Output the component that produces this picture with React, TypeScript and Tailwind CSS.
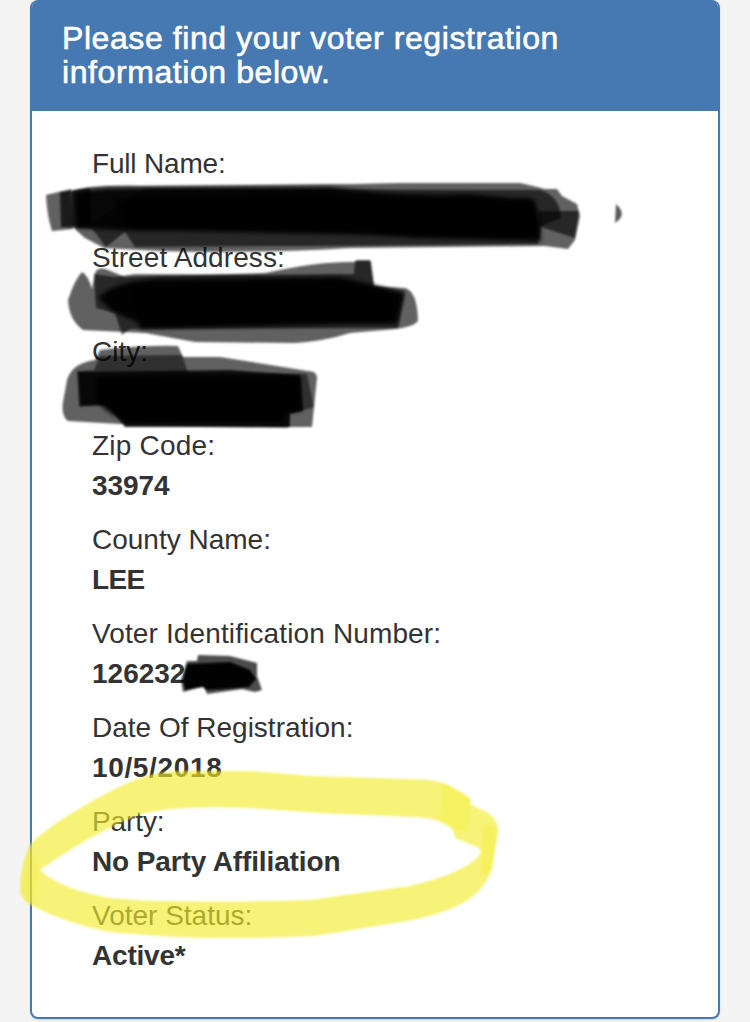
type Field = { label: string; value: string; labelClass?: string; valueClass?: string };

const fields: Field[] = [
  { label: 'Full Name:', value: '', labelClass: 'tracking-[-0.18px]' },
  { label: 'Street Address:', value: '', labelClass: 'tracking-[0.1px]' },
  { label: 'City:', value: '' },
  { label: 'Zip Code:', value: '33974', labelClass: 'tracking-[0.2px]', valueClass: 'tracking-[-0.1px]' },
  { label: 'County Name:', value: 'LEE', valueClass: 'tracking-[-0.7px]' },
  { label: 'Voter Identification Number:', value: '126232', labelClass: 'tracking-[0.13px]' },
  { label: 'Date Of Registration:', value: '10/5/2018', valueClass: 'tracking-[0.65px]' },
  { label: 'Party:', value: 'No Party Affiliation', labelClass: 'tracking-[-0.1px]', valueClass: 'tracking-[-0.13px]' },
  { label: 'Voter Status:', value: 'Active*', valueClass: 'tracking-[-0.2px]' },
];

function FieldRow({ label, value, labelClass = '', valueClass = '' }: Field) {
  return (
    <div className="mb-[14px] h-20 whitespace-nowrap text-[28px] leading-10 text-[#333]">
      <dt className={labelClass}>{label}</dt>
      <dd className={`h-10 font-bold ${valueClass}`}>{value}</dd>
    </div>
  );
}

/* Marker strokes drawn over the card: black redactions and a yellow highlight. */
function Markup() {
  return (
    <svg className="pointer-events-none absolute left-0 top-0" width="750" height="1022" viewBox="0 0 750 1022" aria-hidden="true">
      <defs>
        <filter id="soft" x="-5%" y="-20%" width="110%" height="140%">
          <feGaussianBlur stdDeviation="1.3" />
        </filter>
        <filter id="softer" x="-5%" y="-20%" width="110%" height="140%">
          <feGaussianBlur stdDeviation="2.2" />
        </filter>
      </defs>

      <g filter="url(#soft)" fill="#000">
        <path fillOpacity=".62" d="M46 195L71 189L73 229L52 231Q47 216 46 195Z" />
        <path fillOpacity=".72" d="M60 192L90 188L92 228L61 227Z" />
        <path fillOpacity=".62" d="M72 191Q90 185 140 186L355 184L400 183H520Q534 186 545 189H557L562 196L577 204L580 216L575 240L568 249L545 246L350 248Q250 254 160 251L104 248L85 238Q74 229 72 224Z" />
        <path fillOpacity=".6" d="M90 226L130 196L145 189L540 190Q560 196 561 218L541 226L538 244L310 246L135 247L125 232L106 247Z" />
        <path fillOpacity=".6" d="M538 211H579L575 238L538 226Z" />
        <path fillOpacity=".65" d="M616 204Q628 215 615 223Z" />
      </g>
      <g filter="url(#softer)" fill="#000">
        <path fillOpacity=".93" d="M74 193Q90 188 120 188L330 187Q400 197 470 194L534 200Q541 216 541 241L420 238Q300 229 140 231L76 228Z" />
        <path fillOpacity=".88" d="M115 200L530 198Q538 200 538 232L520 238L130 230Z" />
      </g>

      <g filter="url(#soft)" fill="#000">
        <path fillOpacity=".62" d="M82 272Q88 275 92 289L95 273Q98 266 108 270L125 277L265 273Q320 261 354 262L357 260H370L374 286L405 288Q417 291 418 320Q417 326 396 329L350 333Q325 341 295 343L195 342L145 333L83 330Q69 320 68 300Q75 279 82 272Z" />
        <path fillOpacity=".6" d="M94 274L115 277L135 274L270 275L354 274L355 261H371L374 286L405 291L398 328L130 329L122 335L115 313L96 308Z" />
      </g>
      <g filter="url(#softer)" fill="#000">
        <path fillOpacity=".94" d="M98 298Q112 282 155 279L340 277L370 284L404 294L397 324L330 323L150 328L112 311Z" />
        <path fillOpacity=".9" d="M130 286L355 282L395 294L390 323L140 329Z" />
      </g>

      <g filter="url(#soft)" fill="#000">
        <path fillOpacity=".62" d="M67 380Q72 363 95 360L100 350Q145 345 178 346L183 357H220L308 371Q317 371 317 378L312 427L290 427L120 424L68 421Q61 416 63 402Z" />
        <path fillOpacity=".5" d="M94 370L100 356L182 355L188 373L307 374L314 407L290 414L288 428L125 426L112 404L79 407L77 371Z" />
        <path fillOpacity=".82" d="M78 372L230 370L300 375L303 411L290 413V427L125 427L113 412L109 405L80 406Z" />
      </g>
      <path filter="url(#softer)" fillOpacity=".94" d="M96 377L300 376L301 411L285 413L284 422H130Q113 418 96 401Z" />

      <g fill="#000" filter="url(#soft)">
        <path fillOpacity=".7" d="M187 661L197 661L198 655L230 656L257 663L257 676L262 690L255 692L242 689L207 694L204 686L183 692L181 680Z" />
        <path fillOpacity=".97" d="M187 664L230 662L250 670L256 679L249 687L225 689L206 690L203 687L185 690L183 679Z" />
      </g>

      <g filter="url(#soft)" fill="#f3ec29">
        <path fillOpacity=".64" d="M30 845C42 830 94 797 135 780Q155 771 185 771L250 771Q280 773 310 776L407 779Q441 779 454 788L471 799L470 804L484 811Q498 817 498 832L492 869Q486 889 463 903Q440 915 407 921L315 936Q190 942 104 931Q58 920 33 906Q20 900 20 888Q20 864 30 845ZM40 870Q60 889 110 898Q170 904 310 900L410 886Q468 872 480 854Q482 850 477 847L455 838L453 829Q438 817 412 817L320 813L250 808Q170 805 139 815Q92 833 40 870Z" fillRule="evenodd" />
        <path fillOpacity=".28" d="M442 784Q455 787 471 799L468 831L454 831L440 820Z" />
        <path fillOpacity=".3" d="M484 824L498 827L492 869L480 878Z" />
        <path fillOpacity=".2" d="M30 845L40 870L32 905L21 893Z" />
      </g>
    </svg>
  );
}

export default function App() {
  return (
    <div className="relative h-[1022px] w-[750px] overflow-hidden bg-[#f4f4f4] font-['Liberation_Sans',Arial,sans-serif]">
      <main className="mx-[30px] h-[1019px] overflow-hidden rounded-lg border-2 border-t-0 border-[#4678b2] bg-white shadow-sm">
        <h1 className="h-[111px] bg-[#4678b2] pl-[30px] pt-[21px] text-[32px] leading-[34px] tracking-[0.58px] text-white [-webkit-text-stroke:0.6px_white]">
          Please find your voter registration
          <br />
          information below.
        </h1>
        <dl className="pl-[60px] pt-[33px]">
          {fields.map((f) => (
            <FieldRow key={f.label} {...f} />
          ))}
        </dl>
      </main>
      <Markup />
    </div>
  );
}
